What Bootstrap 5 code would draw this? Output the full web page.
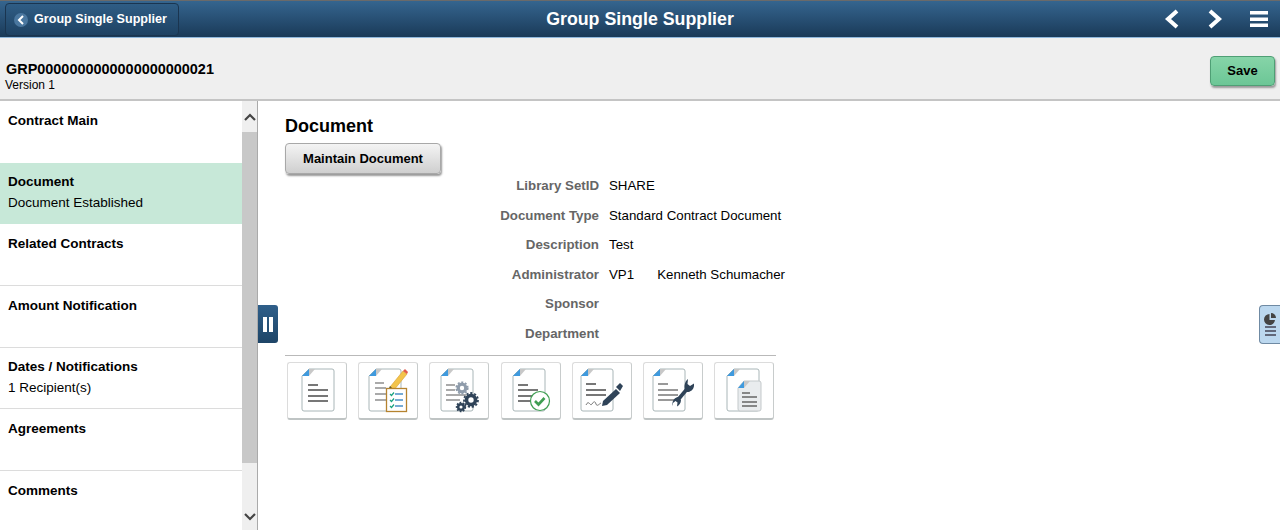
<!DOCTYPE html>
<html lang="en"><head><meta charset="utf-8"><title>Group Single Supplier</title>
<link rel="stylesheet" href="https://cdn.jsdelivr.net/npm/bootstrap@5.3.0/dist/css/bootstrap.min.css">
<style>
html,body{height:530px;overflow:hidden}
body{font-family:"Liberation Sans",Arial,sans-serif;font-size:13.3px;color:#000;background:#fff}
.ps-head{background:linear-gradient(#35658f,#1a3a58);border-top:1px solid #6a6a6a;border-bottom:1px solid #90b8dc;box-sizing:content-box;height:36px;padding:0 0 0 5px}
.ps-back{height:33px;margin-top:2px;width:174px;border:1px solid #1a3550;border-radius:4px;background:linear-gradient(#2f5d85,#1e4263);color:#fff;font-weight:700;font-size:12.6px;padding:0 0 0 8px;gap:6px}
.ps-disc{width:14px;height:14px;border-radius:50%;background:#4a779f}
.ps-title{left:0;right:0;top:0;bottom:0;color:#fff;font-size:17.8px;font-weight:700;pointer-events:none}
.ps-navic{gap:27px;padding-right:12px}
.ps-sub{height:63px;background:#efefef;border-bottom:2px solid #c4c4c4;padding:0 5px 0 5px}
.ps-grp{font-size:14.45px;font-weight:700;line-height:17px;margin-top:23px;padding-left:1px}
.ps-ver{font-size:12px;line-height:15px}
.ps-save{width:65px;height:30px;margin-top:18px;background:linear-gradient(#86d4a8,#6cc696);border:1px solid #4f9f75;border-radius:4px;box-shadow:1px 2px 2px #999;font-size:13px;font-weight:700;color:#000;padding:0}
.ps-main{height:429px}
.ps-left{width:258px;border-right:1px solid #aaa;flex:none}
.ps-list{width:242px;font-size:13.5px}
.ps-item{height:61.7px;padding:8.6px 8px 0 8px;line-height:21px;border-bottom:1px solid #dcdcdc;overflow:hidden}
.ps-item b{display:block}
.ps-item.ps-sel{background:#c7e8d8;border-bottom-color:#c7e8d8}
.ps-item.ps-noline{border-bottom-color:#fff}
.ps-track{width:15px;background:#efefef}
.ps-thumb{height:331px;background:#c8c8c8}
.ps-down{padding-top:50px}
.ps-pause{left:258px;top:204px;width:20px;height:38px;background:linear-gradient(#2f5f8a,#1e4567);border-radius:0 3px 3px 0;gap:2px}
.ps-pause i{display:block;width:4px;height:15px;background:#fff}
.ps-rtab{right:0;top:204px;width:21px;height:39px;background:#bcd8ef;border:1px solid #6f8aa3;border-right:0;border-radius:4px 0 0 4px}
.ps-content{padding:16px 0 0 27px}
.ps-h{font-size:18px;font-weight:700;line-height:18px;margin-bottom:8px}
.ps-btn{width:156px;height:31px;background:linear-gradient(#f4f4f4,#cfcfcf);border:1px solid #a8a8a8;border-radius:4px;box-shadow:1px 2px 2px #999;font-size:13px;font-weight:700;color:#000;padding:0}
.ps-form{width:560px;margin-top:-2.3px}
.ps-row{height:29.5px;gap:10px}
.ps-lab{width:314px;text-align:right;font-weight:700;color:#666;flex:none}
.ps-wide{margin-left:13px}
.ps-rule{border-top:1px solid #b9b9b9;width:491px;margin-top:6.6px;padding-top:6px}
.ps-tiles{gap:11.2px;padding-left:2px}
.ps-tile{width:60px;height:58px;flex:none;background:#fff;border:1px solid #dcdcdc;border-bottom:2px solid #bfc4c4;border-right-color:#c8cccc;border-radius:3px}
.ps-tile svg{display:block}
</style></head>
<body>
<svg width="0" height="0" class="position-absolute">
<defs>
<g id="pg"><path d="M21 8H44Q46 8 46 10V48Q46 50 44 50H16Q14 50 14 48V15Z" fill="#fff" stroke="#a9b6b8" stroke-width="1"/><path d="M14 15L21 8V15Z" fill="#3f9ade"/><path d="M21 8L27 8L21 15Z" fill="#c8c8c8"/></g>
</defs></svg>
<header class="ps-head d-flex align-items-start justify-content-between position-relative">
  <button class="ps-back d-flex align-items-center" type="button"><span class="ps-disc d-flex align-items-center justify-content-center"><svg width="8" height="10" viewBox="0 0 8 10"><path d="M6 1L2 5L6 9" fill="none" stroke="#fff" stroke-width="2"/></svg></span>Group Single Supplier</button>
  <div class="ps-title position-absolute d-flex align-items-center justify-content-center">Group Single Supplier</div>
  <div class="ps-navic d-flex align-items-center h-100">
    <svg width="16" height="20" viewBox="0 0 16 20"><path d="M13 2L4 10L13 18" fill="none" stroke="#fff" stroke-width="4"/></svg>
    <svg width="16" height="20" viewBox="0 0 16 20"><path d="M3 2L12 10L3 18" fill="none" stroke="#fff" stroke-width="4"/></svg>
    <svg width="18" height="16" viewBox="0 0 18 16"><path d="M0 0h18v3.500H0zM0 6.500h18v3.500H0zM0 12.500h18v3.500H0z" fill="#fff"/></svg>
  </div>
</header>
<section class="ps-sub d-flex justify-content-between">
  <div><div class="ps-grp">GRP0000000000000000000021</div><div class="ps-ver">Version 1</div></div>
  <button class="ps-save" type="button">Save</button>
</section>
<main class="ps-main d-flex position-relative">
  <aside class="ps-left d-flex overflow-hidden">
    <div class="ps-list flex-shrink-0">
      <div class="ps-item ps-noline"><b>Contract Main</b></div>
      <div class="ps-item ps-sel"><b>Document</b>Document Established</div>
      <div class="ps-item"><b>Related Contracts</b></div>
      <div class="ps-item"><b>Amount Notification</b></div>
      <div class="ps-item"><b>Dates / Notifications</b>1 Recipient(s)</div>
      <div class="ps-item"><b>Agreements</b></div>
      <div class="ps-item ps-noline"><b>Comments</b></div>
    </div>
    <div class="ps-track d-flex flex-column flex-shrink-0">
      <div class="d-flex align-items-center justify-content-center" style="height:31px"><svg width="12" height="8" viewBox="0 0 12 8"><path d="M1 7L6 2L11 7" fill="none" stroke="#444" stroke-width="2.200"/></svg></div>
      <div class="ps-thumb"></div>
      <div class="ps-down d-flex justify-content-center flex-grow-1"><svg width="12" height="8" viewBox="0 0 12 8"><path d="M1 1L6 6L11 1" fill="none" stroke="#444" stroke-width="2.200"/></svg></div>
    </div>
  </aside>
  <div class="ps-pause position-absolute d-flex align-items-center justify-content-center"><i></i><i></i></div>
  <div class="ps-rtab position-absolute d-flex align-items-center justify-content-center"><svg width="14" height="26" viewBox="0 0 14 26"><path d="M6.500 2A5.500 5.500 0 1 0 12 8H6.500Z" fill="#444"/><path d="M8 1A5 5 0 0 1 13 6H8Z" fill="#444"/><path d="M2 15h11M2 19h11M2 23h11" stroke="#445" stroke-width="1.500"/></svg></div>
  <div class="ps-content flex-grow-1">
    <div class="ps-h">Document</div>
    <button class="ps-btn" type="button">Maintain Document</button>
    <div class="ps-form">
      <div class="ps-row d-flex align-items-center"><div class="ps-lab">Library SetID</div><div>SHARE</div></div>
      <div class="ps-row d-flex align-items-center"><div class="ps-lab">Document Type</div><div class="text-nowrap">Standard Contract Document</div></div>
      <div class="ps-row d-flex align-items-center"><div class="ps-lab">Description</div><div>Test</div></div>
      <div class="ps-row d-flex align-items-center"><div class="ps-lab">Administrator</div><div>VP1</div><div class="ps-wide text-nowrap">Kenneth Schumacher</div></div>
      <div class="ps-row d-flex align-items-center"><div class="ps-lab">Sponsor</div></div>
      <div class="ps-row d-flex align-items-center"><div class="ps-lab">Department</div></div>
    </div>
    <div class="ps-rule">
    <div class="ps-tiles d-flex">
      <div class="ps-tile"><svg width="58" height="55" viewBox="0 2 58 55"><use href="#pg"/><path d="M20 24h10M20 29h20M20 35h20M20 40h20" stroke="#777" stroke-width="1.800"/></svg></div>
      <div class="ps-tile"><svg width="58" height="55" viewBox="0 2 58 55"><use href="#pg" transform="translate(-4 0)"/><path d="M16 22h9M16 27h11M16 33h11M16 39h11" stroke="#aaa" stroke-width="1.800"/><path d="M31 26L44 10L48 13L35 29Z" fill="#f3c44b" stroke="#d8a030" stroke-width=".6"/><path d="M44 10L46 8L49 11L48 13Z" fill="#e25b4c"/><path d="M30 27L31 25L33 27Z" fill="#553"/><rect x="27.500" y="27.500" width="20" height="23" fill="#fff" stroke="#b5832f" stroke-width="1.300"/><path d="M31 33l1.500 1.500 2.500-3M31 39l1.500 1.500 2.500-3M31 45l1.500 1.500 2.500-3" fill="none" stroke="#1aa37f" stroke-width="1.200"/><path d="M36 33h8M36 39h8M36 45h8" stroke="#4a90c8" stroke-width="1.500"/></svg></div>
      <div class="ps-tile"><svg width="58" height="55" viewBox="0 2 58 55"><use href="#pg" transform="translate(-3 0)"/><path d="M16 24h9M16 29h9M16 34h20M16 39h14" stroke="#aaa" stroke-width="1.800"/><circle cx="32" cy="27" r="3.800" fill="none" stroke="#8f9cab" stroke-width="3.200"/><circle cx="32" cy="27" r="5.800" fill="none" stroke="#8f9cab" stroke-width="1.600" stroke-dasharray="2 1.700"/><circle cx="41" cy="39" r="4.500" fill="#fff" stroke="#2f4358" stroke-width="3.600"/><circle cx="41" cy="39" r="7" fill="none" stroke="#2f4358" stroke-width="1.800" stroke-dasharray="2.200 1.800"/><circle cx="31" cy="46" r="2.800" fill="#fff" stroke="#2f4358" stroke-width="2.500"/><circle cx="31" cy="46" r="4.500" fill="none" stroke="#2f4358" stroke-width="1.400" stroke-dasharray="1.800 1.400"/></svg></div>
      <div class="ps-tile"><svg width="58" height="55" viewBox="0 2 58 55"><use href="#pg" transform="translate(-3 0)"/><path d="M16 24h10M16 29h20M16 35h20M16 40h14" stroke="#777" stroke-width="1.800"/><circle cx="38" cy="40" r="9.500" fill="#fff" stroke="#3f9e52" stroke-width="1.200"/><path d="M33 40l3.500 3.500 6-6.500" fill="none" stroke="#3f9e52" stroke-width="2.600"/></svg></div>
      <div class="ps-tile"><svg width="58" height="55" viewBox="0 2 58 55"><use href="#pg" transform="translate(-6 0)"/><path d="M13 23h10M13 29h20M13 34h20" stroke="#777" stroke-width="1.800"/><path d="M13 44c3-6 4 2 6-1s3-3 4 0 3 0 5-1" fill="none" stroke="#777" stroke-width="1"/><path d="M30 40L43 28L47 32L34 44L29 45Z" fill="#2f4358"/><path d="M43 26L47 22L50 25L47 30Z" fill="#2f4358"/></svg></div>
      <div class="ps-tile"><svg width="58" height="55" viewBox="0 2 58 55"><use href="#pg" transform="translate(-5 0)"/><path d="M14 23h10M14 29h20M14 34h20M14 39h20" stroke="#999" stroke-width="1.800"/><path d="M33 40L43 28" stroke="#2f4358" stroke-width="3.600"/><path d="M44 18L43.500 23L46 25L50 22.500V25C49.500 29 46 31.500 42 31C39.500 27 40 21 44 18ZM29 45C27.500 41 29.500 37 34 36L37 39C37 42 35 44.500 33 45.500L33.500 41.500L31.500 40L29 42Z" fill="#2f4358"/></svg></div>
      <div class="ps-tile"><svg width="58" height="55" viewBox="0 2 58 55"><use href="#pg" transform="translate(-2 0)"/><path d="M23 27L29 20H44Q46 20 46 22V48Q46 50 44 50H25Q23 50 23 48Z" fill="#e9ecee" stroke="#c4c9cb"/><path d="M23 27L29 20V27Z" fill="#3f9ade"/><path d="M29 20L35 20L29 27Z" fill="#c8c8c8"/><path d="M27 32h8M27 36h15M27 41h15M27 45h15" stroke="#666" stroke-width="1.500"/></svg></div>
    </div></div>
  </div>
</main>
<script src="https://cdn.jsdelivr.net/npm/bootstrap@5.3.0/dist/js/bootstrap.bundle.min.js"></script>
</body></html>
